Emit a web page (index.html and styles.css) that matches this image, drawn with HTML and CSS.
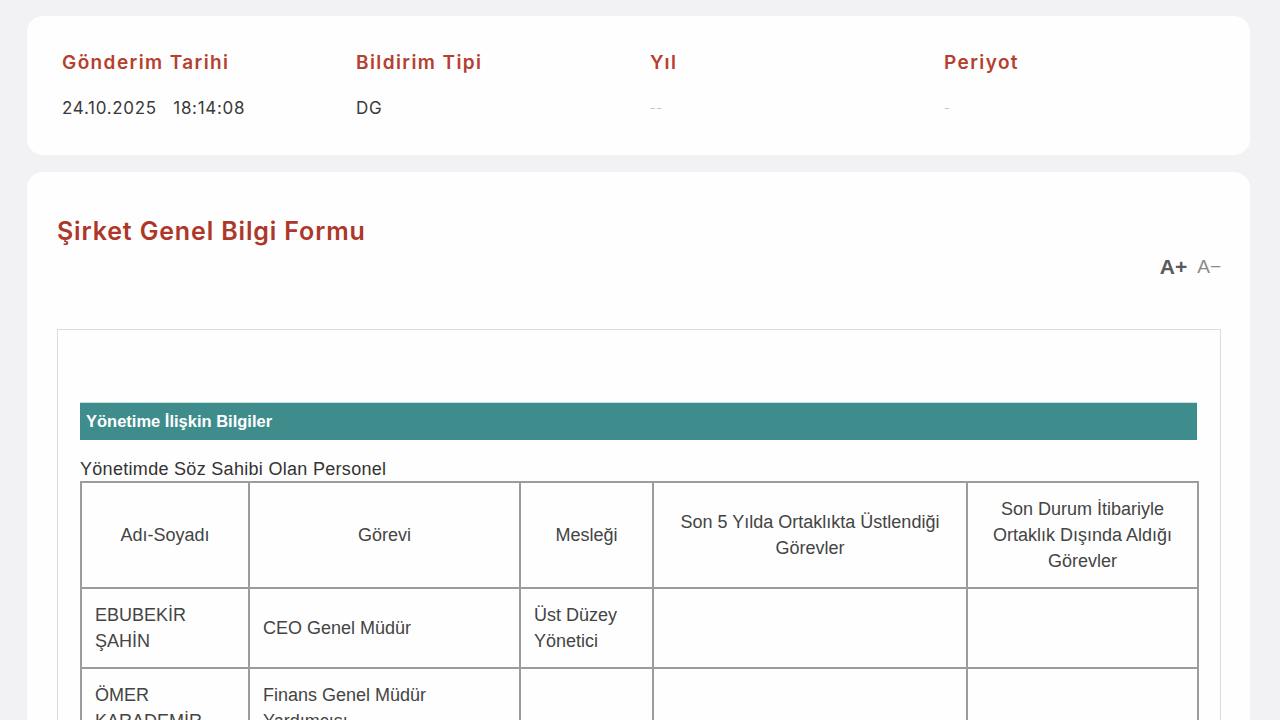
FILE: index.html
```html
<!DOCTYPE html>
<html lang="tr">
<head>
<meta charset="utf-8">
<title>Şirket Genel Bilgi Formu</title>
<link rel="stylesheet" href="styles.css">
</head>
<body>
<main class="page">
  <section class="card summary">
    <div class="field">
      <div class="label">Gönderim Tarihi</div>
      <div class="value">24.10.2025&nbsp;&nbsp;&nbsp;18:14:08</div>
    </div>
    <div class="field">
      <div class="label">Bildirim Tipi</div>
      <div class="value">DG</div>
    </div>
    <div class="field">
      <div class="label">Yıl</div>
      <div class="value muted">--</div>
    </div>
    <div class="field">
      <div class="label">Periyot</div>
      <div class="value muted">-</div>
    </div>
  </section>

  <section class="card form">
    <h1 class="title">Şirket Genel Bilgi Formu</h1>
    <div class="font-tools">
      <span class="fplus">A+</span>
      <span class="fminus">A−</span>
    </div>
    <div class="doc">
      <div class="band">Yönetime İlişkin Bilgiler</div>
      <div class="caption">Yönetimde Söz Sahibi Olan Personel</div>
      <table class="grid">
        <colgroup>
          <col class="c1"><col class="c2"><col class="c3"><col class="c4"><col class="c5">
        </colgroup>
        <thead>
          <tr>
            <th>Adı-Soyadı</th>
            <th>Görevi</th>
            <th>Mesleği</th>
            <th>Son 5 Yılda Ortaklıkta Üstlendiği Görevler</th>
            <th>Son Durum İtibariyle Ortaklık Dışında Aldığı Görevler</th>
          </tr>
        </thead>
        <tbody>
          <tr>
            <td>EBUBEKİR ŞAHİN</td>
            <td>CEO Genel Müdür</td>
            <td>Üst Düzey Yönetici</td>
            <td></td>
            <td></td>
          </tr>
          <tr>
            <td>ÖMER KARADEMİR</td>
            <td>Finans Genel Müdür Yardımcısı</td>
            <td></td>
            <td></td>
            <td></td>
          </tr>
        </tbody>
      </table>
    </div>
  </section>
</main>
</body>
</html>
```

FILE: styles.css
```css
* { box-sizing: border-box; }
html, body { margin: 0; padding: 0; }
body {
  background: #f2f2f4;
  font-family: "Inter", "Noto Sans", sans-serif;
  overflow: hidden;
  height: 720px;
}
.page {
  padding: 16px 30px 0 27px;
  display: flex;
  flex-direction: column;
  gap: 17px;
}
.card {
  background: #fefefe;
  border-radius: 16px;
}
.summary {
  height: 139px;
  padding: 36px 35px 0 35px;
  display: grid;
  grid-template-columns: repeat(4, 294px);
}
.label {
  color: #b5402f;
  font-weight: 600;
  font-size: 19px;
  line-height: 22px;
  letter-spacing: 1.4px;
}
.value {
  margin-top: 24px;
  color: #3a3a3a;
  font-size: 17px;
  line-height: 20px;
  letter-spacing: 0.7px;
}
.value.muted {
  color: #c4c4c4;
  font-size: 12px;
}
.form {
  padding: 40px 29px 0 30px;
  height: 600px;
}
.title {
  margin: 0;
  color: #ad3729;
  font-size: 25px;
  font-weight: 600;
  line-height: 38px;
  letter-spacing: 0.85px;
}
.font-tools {
  display: flex;
  justify-content: flex-end;
  align-items: center;
  gap: 10px;
  margin-top: 5px;
  height: 24px;
  font-family: "Liberation Sans", Arial, sans-serif;
}
.fplus { font-weight: 700; font-size: 21px; color: #5a5a5a; }
.fminus { font-size: 19px; color: #8a8a8a; }
.doc {
  margin-top: 50px;
  border: 1px solid #dcdcdc;
  border-bottom: none;
  padding: 72px 23px 0 22px;
  height: 500px;
  font-family: "Liberation Sans", Arial, sans-serif;
}
.band {
  background: #3e8d8c;
  color: #fff;
  font-weight: 700;
  font-size: 16.5px;
  height: 38px;
  line-height: 36px;
  padding-left: 6px;
  border-top: 1px solid #c8e4e4;
}
.caption {
  margin-top: 19px;
  font-size: 18px;
  color: #333;
  line-height: 20px;
  letter-spacing: 0.3px;
}
.grid {
  width: 1117px;
  border-collapse: collapse;
  table-layout: fixed;
  font-size: 18px;
  color: #444;
  line-height: 26px;
  margin-top: 2px;
}
.c1 { width: 168px; }
.c2 { width: 271px; }
.c3 { width: 133px; }
.c4 { width: 314px; }
.c5 { width: 231px; }
.grid th, .grid td {
  border: 2px solid #9c9c9c;
  vertical-align: middle;
}
.grid th {
  font-weight: 400;
  height: 106px;
  padding: 0 12px;
  text-align: center;
}
.grid td {
  text-align: left;
  padding: 13px 13px;
  height: 79px;
}
```
